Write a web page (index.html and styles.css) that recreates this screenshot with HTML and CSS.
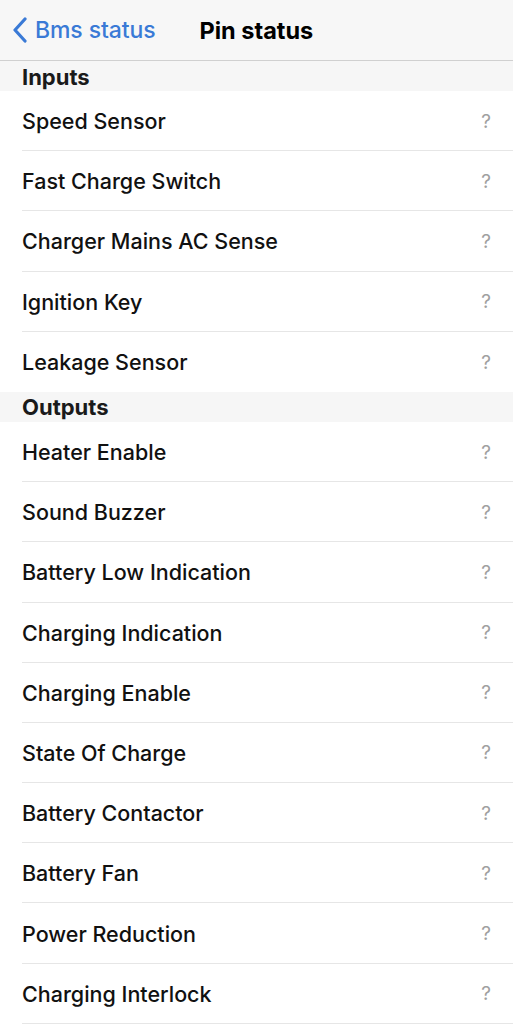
FILE: index.html
```html
<!DOCTYPE html>
<html>
<head>
<meta charset="utf-8">
<link rel="stylesheet" href="styles.css">
</head>
<body>
<header class="nav">
  <a class="back">
    <svg class="chev" width="18" height="26" viewBox="0 0 18 26"><path d="M14 2 L4 13 L14 24" fill="none" stroke="currentColor" stroke-width="3.2" stroke-linecap="round" stroke-linejoin="round"/></svg>
    <span>Bms status</span>
  </a>
  <h1 class="title">Pin status</h1>
</header>
<main>
  <h2 class="section">Inputs</h2>
  <ul class="list">
    <li class="row"><span class="label">Speed Sensor</span><span class="val">?</span></li>
    <li class="row"><span class="label">Fast Charge Switch</span><span class="val">?</span></li>
    <li class="row"><span class="label">Charger Mains AC Sense</span><span class="val">?</span></li>
    <li class="row"><span class="label">Ignition Key</span><span class="val">?</span></li>
    <li class="row last"><span class="label">Leakage Sensor</span><span class="val">?</span></li>
  </ul>
  <h2 class="section">Outputs</h2>
  <ul class="list">
    <li class="row"><span class="label">Heater Enable</span><span class="val">?</span></li>
    <li class="row"><span class="label">Sound Buzzer</span><span class="val">?</span></li>
    <li class="row"><span class="label">Battery Low Indication</span><span class="val">?</span></li>
    <li class="row"><span class="label">Charging Indication</span><span class="val">?</span></li>
    <li class="row"><span class="label">Charging Enable</span><span class="val">?</span></li>
    <li class="row"><span class="label">State Of Charge</span><span class="val">?</span></li>
    <li class="row"><span class="label">Battery Contactor</span><span class="val">?</span></li>
    <li class="row"><span class="label">Battery Fan</span><span class="val">?</span></li>
    <li class="row"><span class="label">Power Reduction</span><span class="val">?</span></li>
    <li class="row"><span class="label">Charging Interlock</span><span class="val">?</span></li>
  </ul>
</main>
</body>
</html>
```
FILE: styles.css
```css
* { box-sizing: border-box; }
html, body { margin: 0; padding: 0; }
body {
  width: 513px;
  background: #fff;
  font-family: Inter, "Noto Sans", sans-serif;
  color: #111;
  overflow: hidden;
}
.nav {
  height: 61px;
  display: flex;
  align-items: center;
  background: #f7f7f7;
  border-bottom: 1px solid #d0d0d0;
  padding-left: 11px;
}
.back {
  display: flex;
  align-items: center;
  color: #3a7ad6;
  font-size: 23px;
  font-weight: 500;
  gap: 6px;
  letter-spacing: -0.1px;
}
.chev { display: block; }
.title {
  margin: 0 0 0 44px;
  font-size: 23.5px;
  font-weight: 700;
  color: #000;
}
.section {
  margin: 0;
  height: 30px;
  display: flex;
  align-items: center;
  padding-left: 22px;
  padding-top: 1px;
  background: #f6f6f6;
  font-size: 22px;
  font-weight: 700;
  color: #1a1a1a;
}
.list { list-style: none; margin: 0; padding: 0 0 0 22px; }
.row {
  height: 60.2px;
  display: flex;
  align-items: center;
  justify-content: space-between;
  border-bottom: 1px solid #e6e6e6;
  padding-right: 22px;
  padding-top: 1px;
}
.row.last { border-bottom: none; }
.label { font-size: 21.5px; font-weight: 500; color: #111; }
.val { font-size: 19px; color: #a0a0a0; }
```
